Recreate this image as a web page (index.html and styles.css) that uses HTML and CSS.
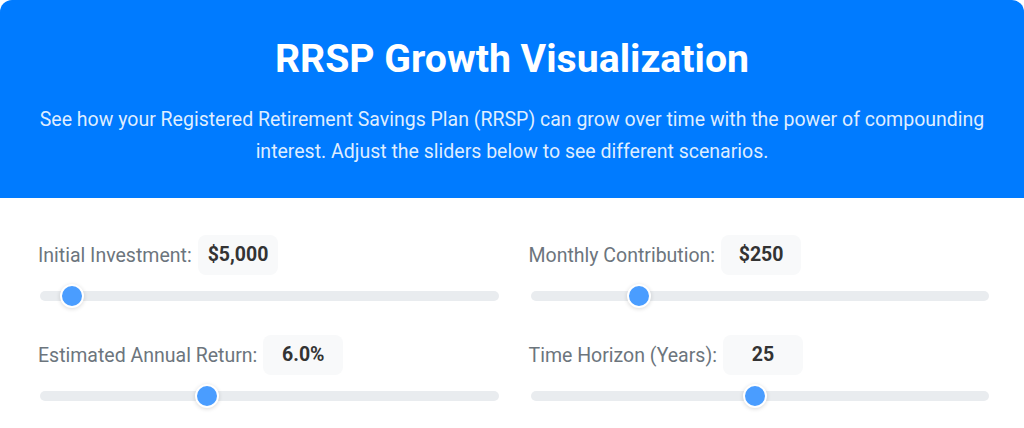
FILE: index.html
```html
<!DOCTYPE html>
<html lang="en">
<head>
<meta charset="utf-8">
<title>RRSP Growth Visualization</title>
<link rel="stylesheet" href="styles.css">
</head>
<body>
<div class="app">
  <header class="hero">
    <h1 class="hero-title">RRSP Growth Visualization</h1>
    <p class="hero-text">See how your Registered Retirement Savings Plan (RRSP) can grow over time with the power of compounding interest. Adjust the sliders below to see different scenarios.</p>
  </header>
  <section class="controls">
    <div class="control">
      <div class="control-head">
        <label class="control-label" for="initial">Initial Investment:</label>
        <span class="control-value">$5,000</span>
      </div>
      <input class="slider" id="initial" type="range" min="500" max="100000" step="500" value="5000">
    </div>
    <div class="control">
      <div class="control-head">
        <label class="control-label" for="monthly">Monthly Contribution:</label>
        <span class="control-value">$250</span>
      </div>
      <input class="slider" id="monthly" type="range" min="50" max="950" step="25" value="250">
    </div>
    <div class="control">
      <div class="control-head">
        <label class="control-label" for="rate">Estimated Annual Return:</label>
        <span class="control-value">6.0%</span>
      </div>
      <input class="slider" id="rate" type="range" min="1" max="15" step="0.5" value="6">
    </div>
    <div class="control">
      <div class="control-head">
        <label class="control-label" for="years">Time Horizon (Years):</label>
        <span class="control-value">25</span>
      </div>
      <input class="slider" id="years" type="range" min="1" max="50" step="1" value="25">
    </div>
  </section>
</div>
</body>
</html>
```

FILE: styles.css
```css
* {
  box-sizing: border-box;
}

body {
  margin: 0;
  background: #ffffff;
  font-family: Roboto, "Liberation Sans", Arial, sans-serif;
}

.app {
  border-radius: 12px;
  overflow: hidden;
  background: #ffffff;
}

.hero {
  background: #007bff;
  color: #ffffff;
  text-align: center;
  padding: 35px 36px 30px;
}

.hero-title {
  margin: 0 0 21px;
  font-size: 39.2px;
  font-weight: 700;
  line-height: 48px;
}

.hero-text {
  margin: 0 auto;
  max-width: 960px;
  font-size: 19.5px;
  line-height: 32px;
  color: rgba(255, 255, 255, 0.88);
}

.controls {
  display: grid;
  grid-template-columns: 1fr 1fr;
  column-gap: 32px;
  row-gap: 34px;
  padding: 37px 35px 20px 40px;
}

.control {
  display: flex;
  flex-direction: column;
  gap: 16px;
}

.control-head {
  display: flex;
  align-items: center;
  gap: 6px;
}

.control-label {
  font-size: 19.5px;
  color: #6c757d;
  margin-left: -2px;
}

.control-value {
  background: #f8f9fa;
  border-radius: 8px;
  padding: 9px 10px;
  min-width: 80px;
  text-align: center;
  font-size: 19.5px;
  font-weight: 700;
  color: #333333;
  line-height: 22px;
}

.slider {
  -webkit-appearance: none;
  appearance: none;
  width: 100%;
  height: 10px;
  margin: 0;
  border-radius: 5px;
  background: #e9ecef;
  outline: none;
}

.slider::-webkit-slider-thumb {
  -webkit-appearance: none;
  appearance: none;
  width: 24px;
  height: 24px;
  border-radius: 50%;
  background: #4a9dff;
  border: 2px solid #ffffff;
  box-shadow: 0 1px 4px rgba(0, 0, 0, 0.15);
  cursor: pointer;
}
```
